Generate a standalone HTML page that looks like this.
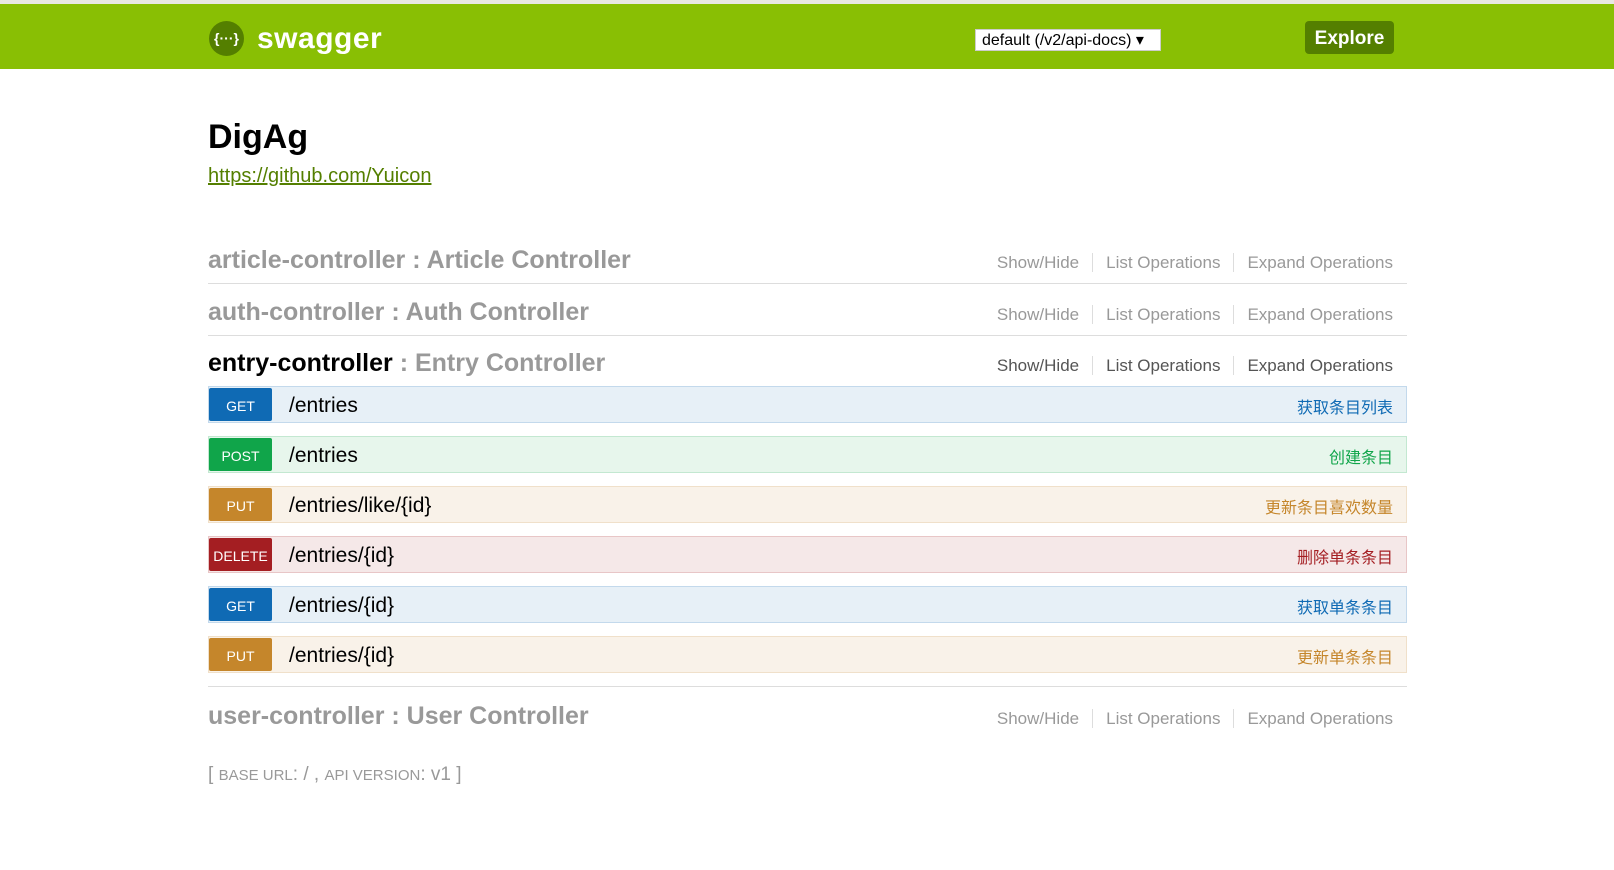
<!DOCTYPE html>
<html><head><meta charset="utf-8"><style>
*{margin:0;padding:0;box-sizing:border-box}
body{width:1614px;height:870px;background:#fff;font-family:"Liberation Sans","Noto Sans CJK SC",sans-serif;position:relative;overflow:hidden}
.top{position:absolute;left:0;top:0;width:1614px;height:4px;background:#e8e8e2}
.hdr{position:absolute;left:0;top:4px;width:1614px;height:65px;background:#89bf04}
.logo{position:absolute;left:209px;top:21px;width:35px;height:35px;border-radius:50%;background:#547f00;color:#fff;font-size:14px;font-weight:bold;text-align:center;line-height:35px}
.sw{position:absolute;left:257px;top:22px;color:#fff;font-size:30px;font-weight:bold;letter-spacing:0.5px}
.sel{position:absolute;left:975px;top:29px;width:186px;height:22px;background:#fff;border:1px solid #ccc;font-size:16px;color:#000;padding-left:6px;line-height:21px}
.exp{position:absolute;left:1305px;top:21px;width:89px;height:33px;background:#547f00;border-radius:4px;color:#fff;font-weight:bold;font-size:19px;text-align:center;line-height:35px}
h1{position:absolute;left:208px;top:118px;font-size:34px;font-weight:bold;color:#000}
.link{position:absolute;left:208px;top:165px;font-size:20px;color:#547f00;text-decoration:underline}
.res{position:absolute;left:208px;width:1199px;height:30px}
.res .t{position:absolute;left:0;top:2px;font-size:25px;font-weight:bold;color:#999;white-space:nowrap}
.res .t b{color:#000}
.ops{position:absolute;right:14px;top:9px;font-size:17px;color:#999;white-space:nowrap}
.ops span{padding:0 13px;border-left:1px solid #ddd}
.ops span:first-child{border-left:none}
.ops span:last-child{padding-right:0}
.line{position:absolute;left:208px;width:1199px;height:1px;background:#ddd}
.op{position:absolute;left:208px;width:1199px;height:37px;border:1px solid}
.op .m{position:absolute;left:0;top:1px;width:63px;height:33px;border-radius:2px;color:#fff;font-size:14px;text-align:center;line-height:37px}
.op .p{position:absolute;left:80px;top:7px;font-size:21px;color:#000}
.op .d{position:absolute;right:13px;top:7px;font-size:16px}
.get{background:#e7f0f7;border-color:#c3d9ec}.get .m{background:#0f6ab4}.get .d{color:#0f6ab4}
.post{background:#e7f6ec;border-color:#c3e8d1}.post .m{background:#10a54a}.post .d{color:#10a54a}
.put{background:#f9f2e9;border-color:#f0e0ca}.put .m{background:#c5862b}.put .d{color:#c5862b}
.del{background:#f5e8e8;border-color:#e8c6c7}.del .m{background:#a41e22}.del .d{color:#a41e22}
.base{position:absolute;left:208px;top:764px;color:#999;font-size:19px;white-space:nowrap}
.base small{font-size:15px}
</style></head><body>
<div class="top"></div>
<div class="hdr"></div>
<div class="logo">{···}</div>
<div class="sw">swagger</div>
<div class="sel">default (/v2/api-docs) ▾</div>
<div class="exp">Explore</div>
<h1>DigAg</h1>
<div class="link">https://github.com/Yuicon</div>

<div class="res" style="top:244px"><div class="t">article-controller : Article Controller</div><div class="ops"><span>Show/Hide</span><span>List Operations</span><span>Expand Operations</span></div></div>
<div class="line" style="top:283px"></div>
<div class="res" style="top:296px"><div class="t">auth-controller : Auth Controller</div><div class="ops"><span>Show/Hide</span><span>List Operations</span><span>Expand Operations</span></div></div>
<div class="line" style="top:335px"></div>
<div class="res" style="top:347px"><div class="t"><b>entry-controller</b> : Entry Controller</div><div class="ops" style="color:#555"><span>Show/Hide</span><span>List Operations</span><span>Expand Operations</span></div></div>

<div class="op get" style="top:386px"><div class="m">GET</div><div class="p">/entries</div><div class="d">获取条目列表</div></div>
<div class="op post" style="top:436px"><div class="m">POST</div><div class="p">/entries</div><div class="d">创建条目</div></div>
<div class="op put" style="top:486px"><div class="m">PUT</div><div class="p">/entries/like/{id}</div><div class="d">更新条目喜欢数量</div></div>
<div class="op del" style="top:536px"><div class="m">DELETE</div><div class="p">/entries/{id}</div><div class="d">删除单条条目</div></div>
<div class="op get" style="top:586px"><div class="m">GET</div><div class="p">/entries/{id}</div><div class="d">获取单条条目</div></div>
<div class="op put" style="top:636px"><div class="m">PUT</div><div class="p">/entries/{id}</div><div class="d">更新单条条目</div></div>

<div class="line" style="top:686px"></div>
<div class="res" style="top:700px"><div class="t">user-controller : User Controller</div><div class="ops"><span>Show/Hide</span><span>List Operations</span><span>Expand Operations</span></div></div>
<div class="base">[ <small>BASE URL</small>: / , <small>API VERSION</small>: v1 ]</div>
</body></html>
